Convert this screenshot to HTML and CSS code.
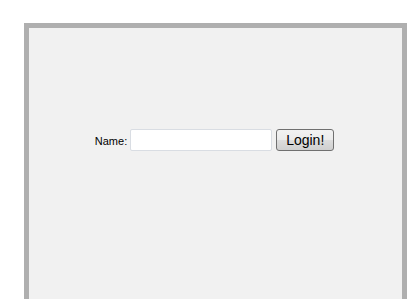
FILE: index.html
```html
<!DOCTYPE html>
<html lang="en">
<head>
    <meta charset="UTF-8">
    <meta name="viewport" content="width=device-width, initial-scale=1.0">
    <title>Login</title>
    <link rel="stylesheet" href="styles.css">
</head>
<body>
    <div class="frame">
        <form class="login" onsubmit="return false;">
            <label for="name">Name:</label>
            <input type="text" id="name">
            <button type="submit">Login!</button>
        </form>
    </div>
</body>
</html>
```
FILE: styles.css
```css
body {
    margin: 0;
    padding: 23px 0 0 24px;
    background: white;
    font-family: Arial, "Liberation Sans", sans-serif;
}
.frame {
    width: 373px;
    height: 271px;
    background: #f1f1f1;
    border: 5px solid #afafaf;
    border-bottom: none;
}
.login {
    display: flex;
    justify-content: center;
    align-items: center;
    padding: 101px 2px 0 0;
    margin: 0;
}
.login label {
    font-size: 11px;
    color: black;
    margin-right: 3px;
    margin-top: 2px;
}
.login input {
    box-sizing: border-box;
    width: 142px;
    height: 22px;
    border: 1px solid #d9dde3;
    border-radius: 2px;
    background: white;
    margin: 0 4px 0 0;
    padding: 0 3px;
}
.login button {
    box-sizing: border-box;
    width: 58px;
    height: 22px;
    border: 1px solid #707070;
    border-radius: 3px;
    background: linear-gradient(#f2f2f2 0%, #ebebeb 50%, #dddddd 51%, #cfcfcf 100%);
    font-family: Arial, "Liberation Sans", sans-serif;
    font-size: 14px;
    color: black;
    padding: 0;
}
```
